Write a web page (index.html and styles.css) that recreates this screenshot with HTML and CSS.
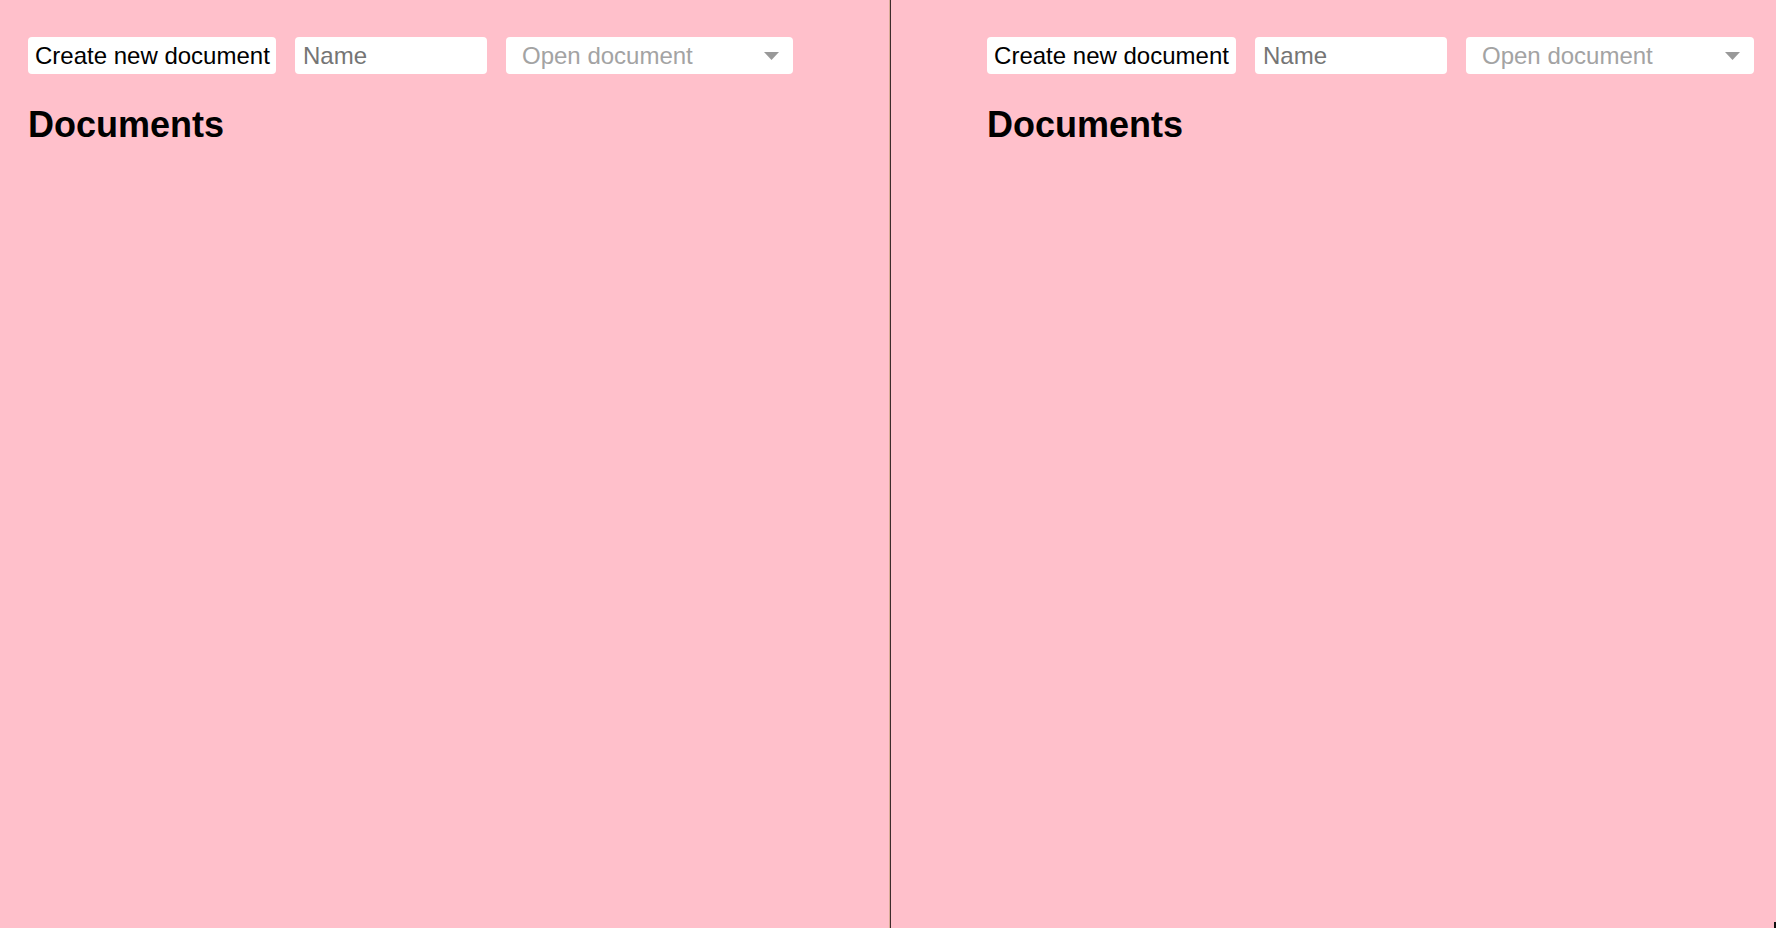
FILE: index.html
```html
<!DOCTYPE html>
<html>
<head>
<meta charset="utf-8">
<link rel="stylesheet" href="styles.css">
</head>
<body>
<div class="split">
  <section class="pane pane-left">
    <div class="toolbar">
      <button class="btn">Create new document</button>
      <input class="name-input" type="text" placeholder="Name">
      <div class="select">
        <span class="select-placeholder">Open document</span>
        <svg class="select-arrow" width="15" height="8" viewBox="0 0 15 8"><path d="M0 0 H15 L7.5 8 Z" fill="#999"/></svg>
      </div>
    </div>
    <h2 class="title">Documents</h2>
  </section>
  <section class="pane pane-right">
    <div class="toolbar">
      <button class="btn">Create new document</button>
      <input class="name-input" type="text" placeholder="Name">
      <div class="select">
        <span class="select-placeholder">Open document</span>
        <svg class="select-arrow" width="15" height="8" viewBox="0 0 15 8"><path d="M0 0 H15 L7.5 8 Z" fill="#999"/></svg>
      </div>
    </div>
    <h2 class="title">Documents</h2>
  </section>
</div>
<div class="corner"></div>
</body>
</html>
```
FILE: styles.css
```css
html, body {
  margin: 0;
  padding: 0;
  height: 100%;
}
body {
  background: pink;
  font-family: "Liberation Sans", Arial, sans-serif;
  font-size: 24px;
  overflow: hidden;
}
.split {
  display: flex;
  height: 100%;
}
.pane {
  box-sizing: border-box;
  padding-top: 37px;
}
.pane-left {
  width: 890px;
  padding-left: 28px;
  border-right: 1px solid #d9ab96;
}
.pane-right {
  flex: 1;
  padding-left: 96px;
  border-left: 1px solid #3d2b2b;
}
.toolbar {
  display: flex;
  gap: 19px;
  height: 37px;
}
.btn {
  font-family: inherit;
  font-size: 24px;
  color: #000;
  background: #fff;
  border: none;
  border-radius: 4px;
  padding: 0 7px;
  height: 37px;
  width: 248px;
  white-space: nowrap;
  cursor: pointer;
}
.pane-right .btn {
  width: 249px;
}
.name-input {
  font-family: inherit;
  font-size: 24px;
  background: #fff;
  border: none;
  border-radius: 4px;
  padding: 0 8px;
  height: 37px;
  width: 192px;
  box-sizing: border-box;
  outline: none;
}
.name-input::placeholder {
  color: #757575;
}
.select {
  box-sizing: border-box;
  width: 287px;
  height: 37px;
  background: #fff;
  border-radius: 4px;
  display: flex;
  align-items: center;
  justify-content: space-between;
  padding: 0 14px 0 16px;
}
.pane-right .select {
  width: 288px;
}
.select-placeholder {
  color: #a3a3a3;
  white-space: nowrap;
}
.select-arrow {
  display: block;
}
.title {
  margin: 30px 0 0;
  font-size: 36px;
  font-weight: bold;
  line-height: normal;
  color: #000;
}
.corner {
  position: absolute;
  right: 0;
  bottom: 0;
  width: 2px;
  height: 6px;
  background: #111;
}
```
